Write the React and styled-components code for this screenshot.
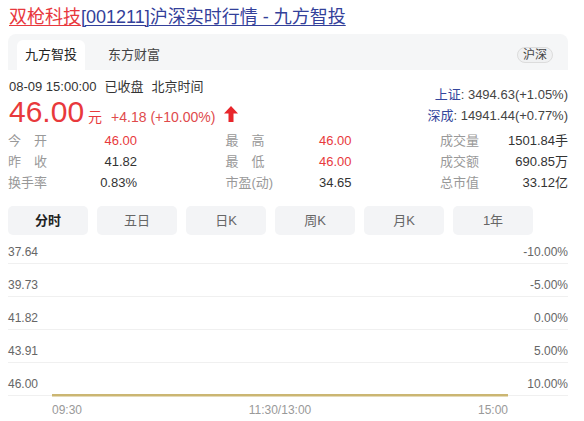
import React from "react";
import styled, { createGlobalStyle } from "styled-components";

const Global = createGlobalStyle`
  html, body { margin: 0; padding: 0; background: #fff; }
  body { font-family: "Liberation Sans", "Noto Sans CJK SC", Arial, sans-serif; color: #333; }
`;

const Page = styled.div`
  width: 560px;
  padding: 0 8px;
`;

const Title = styled.h1`
  margin: 5px 0 5px 1px;
  font-size: 18px;
  font-weight: normal;
  line-height: 24px;
  white-space: nowrap;
`;

const TitleLink = styled.a`
  color: ${(p) => p.$color};
  text-decoration: underline;
  text-underline-offset: 2px;
  text-decoration-thickness: 1px;
`;

const TabBar = styled.div`
  display: flex;
  align-items: flex-end;
  height: 36px;
  padding: 0 15px 0 9px;
  background: #f5f6f7;
  border-radius: 8px 8px 0 0;
  box-sizing: border-box;
`;

const Tab = styled.div`
  height: 30px;
  line-height: 30px;
  padding: 0 8px;
  font-size: 13px;
  color: ${(p) => (p.$active ? "#222" : "#444")};
  background: ${(p) => (p.$active ? "#fff" : "transparent")};
  border-radius: 6px 6px 0 0;
  margin-right: 15px;
`;

const Badge = styled.div`
  margin-left: auto;
  align-self: center;
  height: 16px;
  line-height: 15px;
  padding: 0 5px;
  font-size: 12px;
  color: #444;
  background: #f0f1f2;
  border: 1px solid #dcdcdc;
  border-radius: 9px;
  box-sizing: border-box;
  margin-top: 6px;
`;

const Quote = styled.div`
  display: flex;
  justify-content: space-between;
  padding-left: 1px;
  height: 60px;
`;

const QuoteLeft = styled.div`
  display: flex;
  flex-direction: column;
`;

const DateLine = styled.div`
  font-size: 13px;
  line-height: 17px;
  margin-top: 8px;
  color: #333;
  span + span { margin-left: 8px; }
`;

const PriceLine = styled.div`
  display: flex;
  align-items: baseline;
  color: #e8393c;
  margin-top: 1px;
`;

const Price = styled.span`
  font-size: 30px;
  line-height: 32px;
`;

const Unit = styled.span`
  font-size: 14px;
  margin-left: 4px;
`;

const Change = styled.span`
  font-size: 14px;
  margin-left: 9px;
  color: #e04a4c;
`;

const Arrow = styled.svg`
  margin-left: 9px;
  align-self: center;
  margin-top: 4px;
`;

const Indexes = styled.div`
  display: flex;
  flex-direction: column;
  align-items: flex-end;
  font-size: 13px;
  line-height: 21px;
  padding-top: 14px;
  color: #444;
`;

const IndexName = styled.span`
  color: #34469c;
`;

const Stats = styled.div`
  display: grid;
  grid-template-columns: 129px 126px 128px;
  justify-content: space-between;
  grid-auto-rows: 21px;
  font-size: 13px;
  line-height: 21px;
`;

const Stat = styled.div`
  display: flex;
  justify-content: space-between;
  white-space: nowrap;
`;

const StatLabel = styled.span`
  color: #999;
`;

const StatValue = styled.span`
  color: ${(p) => (p.$red ? "#e8393c" : "#333")};
`;

const Periods = styled.div`
  display: flex;
  gap: 9px;
  margin-top: 13px;
`;

const Period = styled.div`
  width: 80px;
  height: 29px;
  line-height: 29px;
  text-align: center;
  font-size: 13px;
  background: #f3f4f6;
  border-radius: 5px;
  color: ${(p) => (p.$active ? "#222" : "#666")};
  font-weight: ${(p) => (p.$active ? "bold" : "normal")};
`;

const Chart = styled.div`
  position: relative;
  margin-top: 6px;
`;

const GridRow = styled.div`
  display: flex;
  justify-content: space-between;
  align-items: center;
  height: 22px;
  font-size: 12px;
  color: #666;
  border-bottom: 1px solid #f0f0f0;
  & + & { margin-top: 10px; }
`;

const PriceLineSvg = styled.svg`
  position: absolute;
  left: 44px;
  bottom: -1px;
`;

const TimeAxis = styled.div`
  display: flex;
  justify-content: space-between;
  padding: 0 60px 0 44px;
  font-size: 12px;
  line-height: 28px;
  color: #999;
`;

const stats = [
  [["今　开", "46.00", true], ["最　高", "46.00", true], ["成交量", "1501.84手"]],
  [["昨　收", "41.82"], ["最　低", "46.00", true], ["成交额", "690.85万"]],
  [["换手率", "0.83%"], ["市盈(动)", "34.65"], ["总市值", "33.12亿"]],
];

const grid = [
  ["37.64", "-10.00%"],
  ["39.73", "-5.00%"],
  ["41.82", "0.00%"],
  ["43.91", "5.00%"],
  ["46.00", "10.00%"],
];

const periods = ["分时", "五日", "日K", "周K", "月K", "1年"];

export default function App() {
  return (
    <Page>
      <Global />
      <Title>
        <TitleLink $color="#e8383d">双枪科技</TitleLink>
        <TitleLink $color="#33409a">[001211]沪深实时行情 - 九方智投</TitleLink>
      </Title>
      <TabBar>
        <Tab $active>九方智投</Tab>
        <Tab>东方财富</Tab>
        <Badge>沪深</Badge>
      </TabBar>
      <Quote>
        <QuoteLeft>
          <DateLine>
            <span>08-09 15:00:00</span>
            <span>已收盘</span>
            <span>北京时间</span>
          </DateLine>
          <PriceLine>
            <Price>46.00</Price>
            <Unit>元</Unit>
            <Change>+4.18 (+10.00%)</Change>
            <Arrow width="14" height="16" viewBox="0 0 14 16">
              <polygon points="7,0 14,7.5 9.5,7.5 9.5,16 4.5,16 4.5,7.5 0,7.5" fill="#e8262b" />
            </Arrow>
          </PriceLine>
        </QuoteLeft>
        <Indexes>
          <div>
            <IndexName>上证</IndexName>: 3494.63(+1.05%)
          </div>
          <div>
            <IndexName>深成</IndexName>: 14941.44(+0.77%)
          </div>
        </Indexes>
      </Quote>
      <Stats>
        {stats.flat().map(([l, v, red]) => (
          <Stat key={l}>
            <StatLabel>{l}</StatLabel>
            <StatValue $red={red}>{v}</StatValue>
          </Stat>
        ))}
      </Stats>
      <Periods>
        {periods.map((p, i) => (
          <Period key={p} $active={i === 0}>
            {p}
          </Period>
        ))}
      </Periods>
      <Chart>
        {grid.map(([l, r]) => (
          <GridRow key={l}>
            <span>{l}</span>
            <span>{r}</span>
          </GridRow>
        ))}
        <PriceLineSvg width="456" height="3" viewBox="0 0 456 3">
          <rect x="0" y="0" width="456" height="2.5" fill="#cbb672" />
        </PriceLineSvg>
      </Chart>
      <TimeAxis>
        <span>09:30</span>
        <span>11:30/13:00</span>
        <span>15:00</span>
      </TimeAxis>
    </Page>
  );
}
